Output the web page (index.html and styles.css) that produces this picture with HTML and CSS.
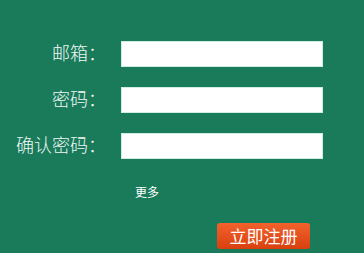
FILE: index.html
```html
<!DOCTYPE html>
<html lang="zh">
<head>
<meta charset="utf-8">
<link rel="stylesheet" href="styles.css">
</head>
<body>
<form class="form">
  <div class="row"><label class="label">邮箱：</label><input class="field" type="text"></div>
  <div class="row"><label class="label">密码：</label><input class="field" type="password"></div>
  <div class="row"><label class="label">确认密码：</label><input class="field" type="password"></div>
  <div class="more">更多</div>
  <div class="actions"><button class="submit" type="button">立即注册</button></div>
</form>
</body>
</html>
```
FILE: styles.css
```css
html, body {
  margin: 0;
  padding: 0;
  background: #1a7b5b;
  width: 364px;
  height: 253px;
  overflow: hidden;
}
body {
  font-family: "Noto Sans CJK SC", "Noto Sans", sans-serif;
  color: #fff;
}
.form {
  margin: 0;
  padding-top: 41px;
}
.row {
  display: flex;
  align-items: center;
  height: 26px;
  margin-bottom: 20px;
}
.row:last-of-type {
  margin-bottom: 0;
}
.label {
  width: 106px;
  margin-right: 15px;
  text-align: right;
  font-size: 18px;
  font-weight: 300;
  line-height: 22px;
  margin-top: -4px;
  color: #f0f8f5;
}
.field {
  box-sizing: border-box;
  width: 202px;
  height: 26px;
  margin: 0;
  padding: 0 4px;
  border: 1px solid #cfeee2;
  background: #fff;
  outline: none;
}
.more {
  margin-top: 25px;
  padding-left: 135px;
  font-size: 12px;
  line-height: 16px;
}
.actions {
  margin-top: 23px;
  padding-left: 217px;
}
.submit {
  display: block;
  width: 93px;
  height: 26px;
  margin: 0;
  padding: 0;
  border: none;
  border-radius: 3px;
  background: linear-gradient(#f2622d, #d9400f);
  color: #fff;
  font-family: "Noto Sans CJK SC", sans-serif;
  font-size: 17px;
  line-height: 26px;
}
```
